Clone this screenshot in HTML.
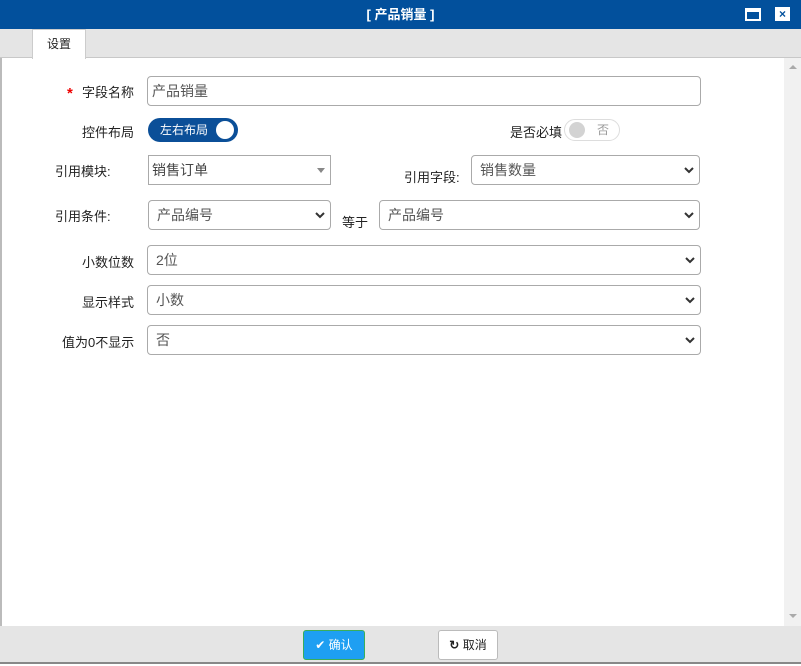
<!DOCTYPE html>
<html><head><meta charset="utf-8"><style>
*{box-sizing:border-box;margin:0;padding:0}
body{width:801px;height:666px;position:relative;overflow:hidden;background:#fff;font-family:"Liberation Sans","Noto Sans CJK SC",sans-serif;font-size:13px;color:#222}
.a{position:absolute}
.title{left:0;top:0;width:801px;height:29px;background:#02509c;color:#fff;text-align:center;line-height:29px;font-size:13px;font-weight:bold}
.tabs{left:0;top:29px;width:801px;height:29px;background:#e5e5e5;border-bottom:1px solid #c8c8c8}
.tab{left:32px;top:29px;width:54px;height:30px;background:#fff;border:1px solid #ccc;border-bottom:none;text-align:center;line-height:28px;font-size:12px}
.lbl{font-size:13px;color:#222;white-space:nowrap}
.in{border:1px solid #aaa;border-radius:4px;background:#fff;color:#555;padding-left:8px;font-size:14px}
.chev{position:absolute;right:5px;top:50%;margin-top:-4px;width:10px;height:8px}
.footer{left:0;top:626px;width:801px;height:38px;background:#e5e5e5;border-bottom:2px solid #888}
</style></head><body>
<div class="a title">[ 产品销量 ]</div>
<div class="a" style="left:745px;top:8px;width:16px;height:13px;background:#fff;"><div style="position:absolute;left:2px;top:4px;width:12px;height:7px;background:#02509c"></div></div>
<div class="a" style="left:775px;top:7px;width:15px;height:14px;background:#fff;color:#02509c;font-size:12px;font-weight:bold;text-align:center;line-height:14px">×</div>
<div class="a tabs"></div>
<div class="a tab">设置</div>
<div class="a" style="left:0;top:58px;width:2px;height:568px;background:#bbb"></div>
<div class="a" style="left:784px;top:58px;width:17px;height:568px;background:#f1f1f1"></div>
<div class="a" style="left:789px;top:65px;width:0;height:0;border-left:4px solid transparent;border-right:4px solid transparent;border-bottom:4px solid #aaa"></div>
<div class="a" style="left:789px;top:614px;width:0;height:0;border-left:4px solid transparent;border-right:4px solid transparent;border-top:4px solid #aaa"></div>

<div class="a lbl" style="left:67px;top:85px;color:#e00;font-weight:bold;font-size:15px">*</div>
<div class="a lbl" style="left:82px;top:82px">字段名称</div>
<div class="a in" style="left:147px;top:76px;width:554px;height:30px;line-height:28px;padding-left:4px;color:#555">产品销量</div>

<div class="a lbl" style="left:82px;top:122px">控件布局</div>
<div class="a" style="left:148px;top:118px;width:90px;height:24px;border-radius:12px;background:#0b4f98;color:#fff;font-size:12px;line-height:24px;padding-left:12px">左右布局<div style="position:absolute;right:4px;top:3px;width:18px;height:18px;border-radius:50%;background:#fff"></div></div>

<div class="a lbl" style="left:510px;top:122px">是否必填</div>
<div class="a" style="left:564px;top:119px;width:56px;height:22px;border-radius:11px;border:1px solid #ddd;background:#fff;color:#999;font-size:12px;line-height:20px;padding-left:32px">否<div style="position:absolute;left:4px;top:2px;width:16px;height:16px;border-radius:50%;background:#d3d3d3"></div></div>

<div class="a lbl" style="left:55px;top:161px">引用模块:</div>
<div class="a" style="left:148px;top:155px;width:183px;height:30px;border:1px solid #aaa;line-height:28px;padding-left:3px;color:#444;font-size:14px">销售订单<div style="position:absolute;right:5px;top:12px;border-left:4px solid transparent;border-right:4px solid transparent;border-top:5px solid #888"></div></div>

<div class="a lbl" style="left:404px;top:167px">引用字段:</div>
<div class="a in" style="left:471px;top:155px;width:229px;height:30px;line-height:28px">销售数量<svg class="chev" viewBox="0 0 10 8"><path d="M1 2l4 4 4-4" stroke="#333" stroke-width="2" fill="none"/></svg></div>

<div class="a lbl" style="left:55px;top:206px">引用条件:</div>
<div class="a in" style="left:148px;top:200px;width:183px;height:30px;line-height:28px">产品编号<svg class="chev" viewBox="0 0 10 8"><path d="M1 2l4 4 4-4" stroke="#333" stroke-width="2" fill="none"/></svg></div>
<div class="a lbl" style="left:342px;top:212px">等于</div>
<div class="a in" style="left:379px;top:200px;width:321px;height:30px;line-height:28px">产品编号<svg class="chev" viewBox="0 0 10 8"><path d="M1 2l4 4 4-4" stroke="#333" stroke-width="2" fill="none"/></svg></div>

<div class="a lbl" style="left:82px;top:252px">小数位数</div>
<div class="a in" style="left:147px;top:245px;width:554px;height:30px;line-height:28px">2位<svg class="chev" viewBox="0 0 10 8"><path d="M1 2l4 4 4-4" stroke="#333" stroke-width="2" fill="none"/></svg></div>
<div class="a lbl" style="left:82px;top:292px">显示样式</div>
<div class="a in" style="left:147px;top:285px;width:554px;height:30px;line-height:28px">小数<svg class="chev" viewBox="0 0 10 8"><path d="M1 2l4 4 4-4" stroke="#333" stroke-width="2" fill="none"/></svg></div>
<div class="a lbl" style="left:62px;top:332px">值为0不显示</div>
<div class="a in" style="left:147px;top:325px;width:554px;height:30px;line-height:28px">否<svg class="chev" viewBox="0 0 10 8"><path d="M1 2l4 4 4-4" stroke="#333" stroke-width="2" fill="none"/></svg></div>

<div class="a footer"></div>
<div class="a" style="left:303px;top:630px;width:62px;height:30px;background:#1e9ff2;border:1px solid #3aae5a;border-radius:3px;color:#fff;font-size:12px;line-height:28px;text-align:center">✔ 确认</div>
<div class="a" style="left:438px;top:630px;width:60px;height:30px;background:#fff;border:1px solid #bbb;border-radius:3px;color:#222;font-size:12px;line-height:28px;text-align:center"><b>↻</b> 取消</div>
</body></html>
